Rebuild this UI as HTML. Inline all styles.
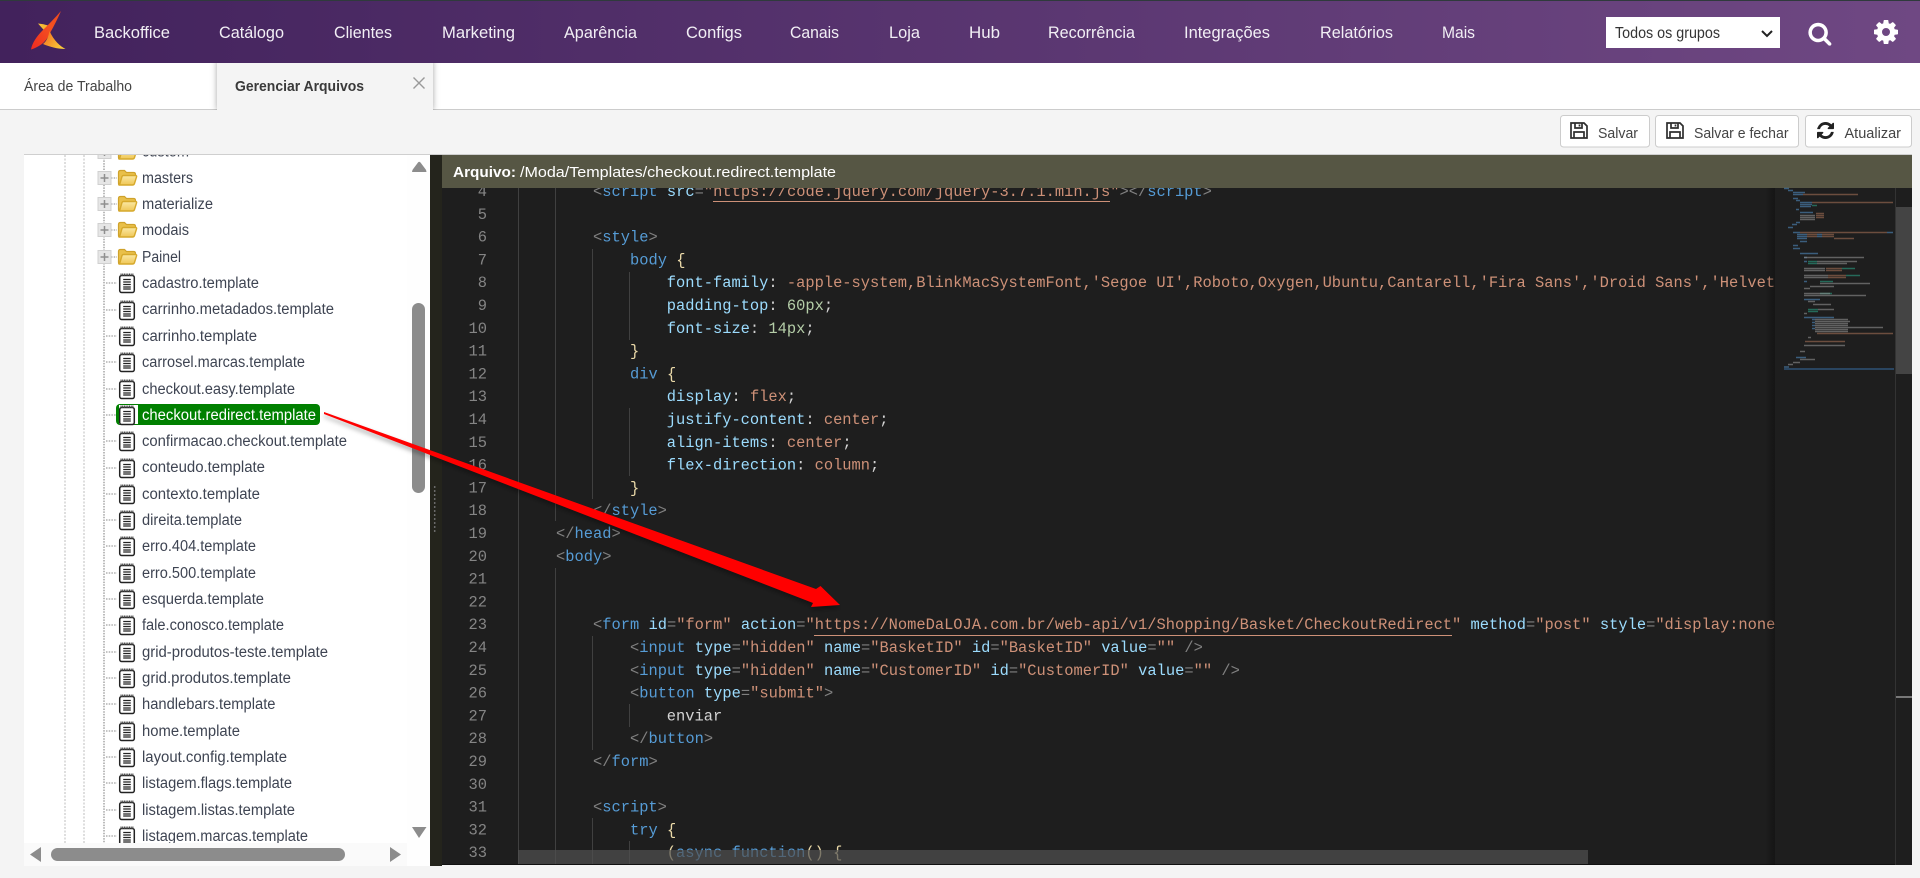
<!DOCTYPE html>
<html lang="pt-BR"><head><meta charset="utf-8"><title>Gerenciar Arquivos</title>
<style>
html,body{margin:0;padding:0;width:1920px;height:878px;overflow:hidden;background:#f4f4f4}
#hd{position:absolute;left:0;top:0;width:1920px;height:63px;background:linear-gradient(90deg,#42225c,#6f4883);border-top:1px solid #2f3a3c;box-sizing:border-box;z-index:3}
#tb{position:absolute;left:0;top:63px;width:1920px;height:46px;background:#fff;border-bottom:1px solid #ccc;z-index:1}
#at{position:absolute;left:217px;top:60px;width:216px;height:50px;background:#f4f4f4;box-shadow:0 0 6px rgba(0,0,0,.35);clip-path:inset(0 -10px 0 -10px);z-index:2}
svg#m{position:absolute;left:0;top:0;z-index:4}
text{font-family:"Liberation Sans",sans-serif;white-space:pre}
.nav{font-size:16.5px;fill:#f2eff5}
.tr{font-size:15.5px;fill:#3e4452}
.bt{font-size:15px;fill:#444}
.c{font-family:"Liberation Mono",monospace;font-size:15.4px;fill:#d4d4d4}
.ln{font-family:"Liberation Mono",monospace;font-size:15.4px;fill:#858585;text-anchor:end}
.b{fill:#808080}.t{fill:#569cd6}.a{fill:#9cdcfe}.s{fill:#ce9178}.n{fill:#b5cea8}.g{fill:#ead9a8}
.gd{stroke:#404040;stroke-width:1;fill:none}
</style></head><body>
<div id="hd"></div><div id="tb"></div><div id="at"></div>
<svg id="m" width="1920" height="878" viewBox="0 0 1920 878" xmlns="http://www.w3.org/2000/svg">
<defs>
<linearGradient id="lg1" x1="0" y1="1" x2="1" y2="0"><stop offset="0" stop-color="#f02a22"/><stop offset=".6" stop-color="#f4511f"/><stop offset="1" stop-color="#f0481e"/></linearGradient>
<linearGradient id="lg2" x1="0" y1="0" x2="1" y2=".6"><stop offset="0" stop-color="#f46a1c"/><stop offset="1" stop-color="#f9c93a"/></linearGradient>
<linearGradient id="lg3" x1="0" y1="0" x2="1" y2="1"><stop offset="0" stop-color="#f8c63c"/><stop offset="1" stop-color="#f59a1e"/></linearGradient>
<linearGradient id="fo" x1="0" y1="0" x2="0" y2="1"><stop offset="0" stop-color="#fbe9a6"/><stop offset="1" stop-color="#efc655"/></linearGradient>
<linearGradient id="sh" x1="0" y1="0" x2="1" y2="0"><stop offset="0" stop-color="#000" stop-opacity="0"/><stop offset="1" stop-color="#000" stop-opacity=".3"/></linearGradient>
<clipPath id="cc"><rect x="442" y="188" width="1333" height="678"/></clipPath>
<clipPath id="ct"><rect x="24" y="155" width="383" height="688"/></clipPath>
<clipPath id="cn"><rect x="442" y="188" width="75" height="678"/></clipPath>
<filter id="bl" x="-10%" y="-10%" width="120%" height="120%"><feGaussianBlur stdDeviation="2.5"/></filter>
<g id="fd"><path d="M-8.500 7Q-9 7-9 5V-5.500Q-9-7.500-7-7.500H-3L-1-5.500H6Q8-5.500 8-3.500V-1H-5z" fill="#e9c04a" stroke="#cfa22c" stroke-width="1.200"/><path d="M-8 7L-5.500-1.500Q-5-2.500-4-2.500H8Q9.500-2.500 9-1L7 5.500Q6.500 7 5 7Z" fill="url(#fo)" stroke="#d6a92c" stroke-width="1.400"/></g>
<g id="fl"><rect x="-7.300" y="-7.500" width="14.600" height="17" rx="2" fill="#fff" stroke="#222" stroke-width="1.500"/><path d="M-6-9.500v2.500M-4.300-9.500v2.500M-2.600-9.500v2.500M-.9-9.500v2.500M.8-9.500v2.500M2.500-9.500v2.500M4.200-9.500v2.500M5.900-9.500v2.500" stroke="#444" stroke-width="1"/><path d="M-3.800-3.500h7.600M-3.800-1h7.600M-3.800 1.500h7.600M-3.800 4h7.600M-3.800 6h7.600" stroke="#222" stroke-width="1.300"/></g>
<g id="pl"><rect x="-6.500" y="-6.500" width="13" height="13" fill="#e6e6e6" stroke="#d0d0d0"/><path d="M-4 0h8M0-4v8" stroke="#8f8f8f" stroke-width="1.500"/></g>
<path id="sv" d="M1 1h13l3 3v12H1zM5 1v5h7V1M9.500 2.500v2M4 16v-6h10v6" fill="none" stroke="#2e2e2e" stroke-width="1.700"/>
</defs>

<!-- Logo -->
<path d="M38 23.500C43 24 48 25 51 27L49 36C45 31 41 27 38 23.500Z" fill="url(#lg3)"/>
<path d="M61 11C58 18 54 26 50 33C47 40 42 46 31 49.500C32 43 37 36 42 31C48 25 55 18 61 11Z" fill="url(#lg1)"/>
<path d="M49.500 31C54 41 60 46 65.500 49C58 49 50 47 43 44C47 41 48.500 36 49.500 31Z" fill="url(#lg2)"/>

<!-- Nav -->
<g class="nav">
<text x="94" y="38" textLength="76" lengthAdjust="spacingAndGlyphs">Backoffice</text>
<text x="219" y="38" textLength="65" lengthAdjust="spacingAndGlyphs">Catálogo</text>
<text x="334" y="38" textLength="58" lengthAdjust="spacingAndGlyphs">Clientes</text>
<text x="442" y="38" textLength="73" lengthAdjust="spacingAndGlyphs">Marketing</text>
<text x="564" y="38" textLength="73" lengthAdjust="spacingAndGlyphs">Aparência</text>
<text x="686" y="38" textLength="56" lengthAdjust="spacingAndGlyphs">Configs</text>
<text x="790" y="38" textLength="49" lengthAdjust="spacingAndGlyphs">Canais</text>
<text x="889" y="38" textLength="31" lengthAdjust="spacingAndGlyphs">Loja</text>
<text x="969" y="38" textLength="31" lengthAdjust="spacingAndGlyphs">Hub</text>
<text x="1048" y="38" textLength="87" lengthAdjust="spacingAndGlyphs">Recorrência</text>
<text x="1184" y="38" textLength="86" lengthAdjust="spacingAndGlyphs">Integrações</text>
<text x="1320" y="38" textLength="73" lengthAdjust="spacingAndGlyphs">Relatórios</text>
<text x="1442" y="38" textLength="33" lengthAdjust="spacingAndGlyphs">Mais</text>
</g>
<rect x="1606" y="17" width="174" height="31" fill="#fff"/>
<text x="1615" y="38" font-size="15.500" fill="#333" textLength="105" lengthAdjust="spacingAndGlyphs">Todos os grupos</text>
<path d="M1762 31l5 5 5-5" fill="none" stroke="#222" stroke-width="2"/>
<svg x="1807.500" y="21" width="24.800" height="24.800" viewBox="0 0 1792 1792"><path fill="#fff" d="M1216 832q0-185-131.500-316.500t-316.500-131.500-316.500 131.500-131.500 316.500 131.500 316.500 316.500 131.500 316.500-131.500 131.500-316.500zm512 832q0 52-38 90t-90 38q-54 0-90-38l-343-342q-179 124-399 124-143 0-273.500-55.500t-225-150-150-225-55.500-273.500 55.500-273.500 150-225 225-150 273.500-55.500 273.500 55.500 225 150 150 225 55.500 273.500q0 220-124 399l343 343q37 37 37 90z"/></svg>
<svg x="1872" y="18" width="28" height="28" viewBox="0 0 1792 1792"><path fill="#fff" d="M1152 896q0-106-75-181t-181-75-181 75-75 181 75 181 181 75 181-75 75-181zm512-109v222q0 12-8 23t-20 13l-185 28q-19 54-39 91 35 50 107 138 10 12 10 25t-9 23q-27 37-99 108t-94 71q-12 0-26-9l-138-108q-44 23-91 38-16 136-29 186-7 28-36 28h-222q-14 0-24.500-8.500t-11.500-21.500l-28-184q-49-16-90-37l-141 107q-10 9-25 9-14 0-25-11-126-114-165-168-7-10-7-23 0-12 8-23 15-21 51-66.500t54-70.500q-27-50-41-99l-183-27q-13-2-21-12.500t-8-23.500v-222q0-12 8-23t19-13l186-28q14-46 39-92-40-57-107-138-10-12-10-24 0-10 9-23 26-36 98.500-107.500t94.500-71.500q13 0 26 10l138 107q44-23 91-38 16-136 29-186 7-28 36-28h222q14 0 24.500 8.500t11.500 21.500l28 184q49 16 90 37l142-107q9-9 24-9 13 0 25 10 129 119 165 170 7 8 7 22 0 12-8 23-15 21-51 66.500t-54 70.500q26 50 41 98l183 28q13 2 21 12.500t8 23.500z"/></svg>

<!-- Tabs -->
<text x="24" y="91" font-size="15" fill="#444" textLength="108" lengthAdjust="spacingAndGlyphs">Área de Trabalho</text>
<text x="235" y="91" font-size="15" font-weight="bold" fill="#3a3a3a" textLength="129" lengthAdjust="spacingAndGlyphs">Gerenciar Arquivos</text>
<path d="M413.500 77.500l11 11M424.500 77.500l-11 11" stroke="#999" stroke-width="1.400"/>

<!-- Buttons -->
<g fill="#fff" stroke="#ccc"><rect x="1560.500" y="115.500" width="89" height="31.500" rx="3"/><rect x="1655.500" y="115.500" width="143" height="31.500" rx="3"/><rect x="1805.500" y="115.500" width="106" height="31.500" rx="3"/></g>
<use href="#sv" x="1570" y="122"/><use href="#sv" x="1666" y="122"/>
<svg x="1817" y="122" width="17" height="17" viewBox="0 0 1536 1536"><path fill="#222" d="M1511 928q0 5-1 7-64 268-268 434.500t-478 166.500q-146 0-282.500-55t-243.500-157l-129 129q-19 19-45 19t-45-19-19-45v-448q0-26 19-45t45-19h448q26 0 45 19t19 45-19 45l-137 137q71 66 161 102t187 36q134 0 250-65t186-179q11-17 53-117 8-23 30-23h192q13 0 22.500 9.500t9.500 22.500zm25-800v448q0 26-19 45t-45 19h-448q-26 0-45-19t-19-45 19-45l138-138q-148-137-349-137-134 0-250 65t-186 179q-11 17-53 117-8 23-30 23h-199q-13 0-22.500-9.500t-9.500-22.500v-7q65-268 270-434.500t480-166.500q146 0 284 55.500t245 156.500l130-129q19-19 45-19t45 19 19 45z"/></svg>
<g class="bt">
<text x="1598" y="138" textLength="40" lengthAdjust="spacingAndGlyphs">Salvar</text>
<text x="1694" y="138" textLength="94.500" lengthAdjust="spacingAndGlyphs">Salvar e fechar</text>
<text x="1844.500" y="138" textLength="56.500" lengthAdjust="spacingAndGlyphs">Atualizar</text>
</g>

<!-- Tree panel -->
<rect x="24" y="154" width="406" height="712" fill="#fff"/>
<rect x="24" y="154" width="1888" height="1" fill="#cfcfcf"/>
<rect x="407" y="155" width="23" height="711" fill="#fefefe"/>
<rect x="24" y="843" width="383" height="23" fill="#fafafa"/>
<g clip-path="url(#ct)">
<path d="M65 155V843M84 155V843" stroke="#bdbdbd" stroke-dasharray="2 1.500" fill="none"/>
<path d="M104 155V843" stroke="#777" stroke-dasharray="1.500 1.200" fill="none"/>
<path d="M111 178h6M111 204h6M111 230h6M111 257h6M106 283h11M106 310h11M106 336h11M106 362h11M106 389h11M106 415h11M106 441h11M106 468h11M106 494h11M106 520h11M106 546h11M106 573h11M106 599h11M106 625h11M106 652h11M106 678h11M106 704h11M106 731h11M106 757h11M106 783h11M106 810h11M106 836h11" stroke="#888" stroke-dasharray="1.500 1.200" fill="none"/>
<use href="#pl" x="104.500" y="152"/><use href="#fd" x="127.500" y="152"/>
<use href="#pl" x="104.500" y="178"/><use href="#fd" x="127.500" y="178"/>
<use href="#pl" x="104.500" y="204"/><use href="#fd" x="127.500" y="204"/>
<use href="#pl" x="104.500" y="230"/><use href="#fd" x="127.500" y="230"/>
<use href="#pl" x="104.500" y="257"/><use href="#fd" x="127.500" y="257"/>
<rect x="116" y="404" width="204" height="21" rx="4" fill="#008000"/>
<rect x="119" y="405" width="19" height="19" fill="#fff"/>
<use href="#fl" x="127" y="283"/><use href="#fl" x="127" y="310"/><use href="#fl" x="127" y="336"/><use href="#fl" x="127" y="362"/><use href="#fl" x="127" y="389"/><use href="#fl" x="127" y="415"/><use href="#fl" x="127" y="441"/><use href="#fl" x="127" y="468"/><use href="#fl" x="127" y="494"/><use href="#fl" x="127" y="520"/><use href="#fl" x="127" y="546"/><use href="#fl" x="127" y="573"/><use href="#fl" x="127" y="599"/><use href="#fl" x="127" y="625"/><use href="#fl" x="127" y="652"/><use href="#fl" x="127" y="678"/><use href="#fl" x="127" y="704"/><use href="#fl" x="127" y="731"/><use href="#fl" x="127" y="757"/><use href="#fl" x="127" y="783"/><use href="#fl" x="127" y="810"/><use href="#fl" x="127" y="836"/>
<g class="tr">
<text x="142" y="156.500" textLength="47" lengthAdjust="spacingAndGlyphs">custom</text>
<text x="142" y="183" textLength="51" lengthAdjust="spacingAndGlyphs">masters</text>
<text x="142" y="209" textLength="71" lengthAdjust="spacingAndGlyphs">materialize</text>
<text x="142" y="235" textLength="47" lengthAdjust="spacingAndGlyphs">modais</text>
<text x="142" y="262" textLength="39" lengthAdjust="spacingAndGlyphs">Painel</text>
<text x="142" y="288" textLength="117" lengthAdjust="spacingAndGlyphs">cadastro.template</text>
<text x="142" y="314" textLength="192" lengthAdjust="spacingAndGlyphs">carrinho.metadados.template</text>
<text x="142" y="341" textLength="115" lengthAdjust="spacingAndGlyphs">carrinho.template</text>
<text x="142" y="367" textLength="163" lengthAdjust="spacingAndGlyphs">carrosel.marcas.template</text>
<text x="142" y="394" textLength="153" lengthAdjust="spacingAndGlyphs">checkout.easy.template</text>
<text x="142" y="420" textLength="174" lengthAdjust="spacingAndGlyphs" style="fill:#fff">checkout.redirect.template</text>
<text x="142" y="446" textLength="205" lengthAdjust="spacingAndGlyphs">confirmacao.checkout.template</text>
<text x="142" y="472" textLength="123" lengthAdjust="spacingAndGlyphs">conteudo.template</text>
<text x="142" y="499" textLength="118" lengthAdjust="spacingAndGlyphs">contexto.template</text>
<text x="142" y="525" textLength="100" lengthAdjust="spacingAndGlyphs">direita.template</text>
<text x="142" y="551" textLength="114" lengthAdjust="spacingAndGlyphs">erro.404.template</text>
<text x="142" y="578" textLength="114" lengthAdjust="spacingAndGlyphs">erro.500.template</text>
<text x="142" y="604" textLength="122" lengthAdjust="spacingAndGlyphs">esquerda.template</text>
<text x="142" y="630" textLength="142" lengthAdjust="spacingAndGlyphs">fale.conosco.template</text>
<text x="142" y="657" textLength="186" lengthAdjust="spacingAndGlyphs">grid-produtos-teste.template</text>
<text x="142" y="683" textLength="149" lengthAdjust="spacingAndGlyphs">grid.produtos.template</text>
<text x="142" y="709" textLength="133.500" lengthAdjust="spacingAndGlyphs">handlebars.template</text>
<text x="142" y="736" textLength="98" lengthAdjust="spacingAndGlyphs">home.template</text>
<text x="142" y="762" textLength="145" lengthAdjust="spacingAndGlyphs">layout.config.template</text>
<text x="142" y="788" textLength="150" lengthAdjust="spacingAndGlyphs">listagem.flags.template</text>
<text x="142" y="815" textLength="153" lengthAdjust="spacingAndGlyphs">listagem.listas.template</text>
<text x="142" y="841" textLength="166" lengthAdjust="spacingAndGlyphs">listagem.marcas.template</text>
</g>
</g>
<!-- tree scrollbars -->
<g fill="#8c8c8c">
<path d="M412 172q0-2 1.500-3.500L418 162.500q1-1.500 2.500 0L425 168.500q1.500 1.500 1.500 3.500z"/>
<path d="M412 827h14.500L419 838z"/>
<rect x="412" y="303" width="13" height="190" rx="6.500"/>
<path d="M41 847v15L30 854.500z"/>
<path d="M390 847v15L401 854.500z"/>
<rect x="51" y="848" width="294" height="13" rx="6.500"/>
</g>

<!-- Editor -->
<rect x="430" y="155" width="12" height="711" fill="#24241c"/>
<path d="M434.700 486V533" stroke="#6a6a6a" stroke-width="1.500" stroke-dasharray="2 2"/>
<rect x="442" y="188" width="1470" height="677" fill="#1e1e1e"/>
<rect x="442" y="155" width="1470" height="33" fill="#565644"/>
<text x="453" y="177" font-size="15" font-weight="bold" fill="#fff" textLength="63" lengthAdjust="spacingAndGlyphs">Arquivo:</text>
<text x="520" y="177" font-size="15" fill="#fff" textLength="316" lengthAdjust="spacingAndGlyphs">/Moda/Templates/checkout.redirect.template</text>

<g clip-path="url(#cn)"><g transform="translate(0 -1)">
<text class="ln" x="487" y="197">4</text><text class="ln" x="487" y="219.800">5</text><text class="ln" x="487" y="242.600">6</text><text class="ln" x="487" y="265.400">7</text><text class="ln" x="487" y="288.200">8</text><text class="ln" x="487" y="311">9</text><text class="ln" x="487" y="333.800">10</text><text class="ln" x="487" y="356.600">11</text><text class="ln" x="487" y="379.400">12</text><text class="ln" x="487" y="402.200">13</text><text class="ln" x="487" y="425">14</text><text class="ln" x="487" y="447.800">15</text><text class="ln" x="487" y="470.600">16</text><text class="ln" x="487" y="493.400">17</text><text class="ln" x="487" y="516.200">18</text><text class="ln" x="487" y="539">19</text><text class="ln" x="487" y="561.800">20</text><text class="ln" x="487" y="584.600">21</text><text class="ln" x="487" y="607.400">22</text><text class="ln" x="487" y="630.200">23</text><text class="ln" x="487" y="653">24</text><text class="ln" x="487" y="675.800">25</text><text class="ln" x="487" y="698.600">26</text><text class="ln" x="487" y="721.400">27</text><text class="ln" x="487" y="744.200">28</text><text class="ln" x="487" y="767">29</text><text class="ln" x="487" y="789.800">30</text><text class="ln" x="487" y="812.600">31</text><text class="ln" x="487" y="835.400">32</text><text class="ln" x="487" y="858.200">33</text>
</g></g>

<path class="gd" d="M518.500 188V865M555.500 188V521M555.500 568V865M592.500 249V499M592.500 636V750M592.500 818V865M629.500 272V340M629.500 408V476M629.500 704V727M629.500 841V865"/>

<g clip-path="url(#cc)">
<rect x="713" y="201" width="397" height="1" fill="#ce9178"/>
<rect x="814" y="635" width="638" height="1" fill="#ce9178"/>
<g transform="translate(0 -1)">
<text class="c" x="593" y="197"><tspan class="b">&lt;</tspan><tspan class="t">script</tspan> <tspan class="a">src</tspan><tspan class="b">=</tspan><tspan class="s">"https://code.jquery.com/jquery-3.7.1.min.js"</tspan><tspan class="b">&gt;&lt;/</tspan><tspan class="t">script</tspan><tspan class="b">&gt;</tspan></text>
<text class="c" x="593" y="242.600"><tspan class="b">&lt;</tspan><tspan class="t">style</tspan><tspan class="b">&gt;</tspan></text>
<text class="c" x="630" y="265.400"><tspan class="t">body</tspan> <tspan class="g">{</tspan></text>
<text class="c" x="666.800" y="288.200"><tspan class="a">font-family</tspan>: <tspan class="s">-apple-system,BlinkMacSystemFont,'Segoe UI',Roboto,Oxygen,Ubuntu,Cantarell,'Fira Sans','Droid Sans','Helvetica Neue'</tspan></text>
<text class="c" x="666.800" y="311"><tspan class="a">padding-top</tspan>: <tspan class="n">60px</tspan>;</text>
<text class="c" x="666.800" y="333.800"><tspan class="a">font-size</tspan>: <tspan class="n">14px</tspan>;</text>
<text class="c" x="630" y="356.600"><tspan class="g">}</tspan></text>
<text class="c" x="630" y="379.400"><tspan class="t">div</tspan> <tspan class="g">{</tspan></text>
<text class="c" x="666.800" y="402.200"><tspan class="a">display</tspan>: <tspan class="s">flex</tspan>;</text>
<text class="c" x="666.800" y="425"><tspan class="a">justify-content</tspan>: <tspan class="s">center</tspan>;</text>
<text class="c" x="666.800" y="447.800"><tspan class="a">align-items</tspan>: <tspan class="s">center</tspan>;</text>
<text class="c" x="666.800" y="470.600"><tspan class="a">flex-direction</tspan>: <tspan class="s">column</tspan>;</text>
<text class="c" x="630" y="493.400"><tspan class="g">}</tspan></text>
<text class="c" x="593" y="516.200"><tspan class="b">&lt;/</tspan><tspan class="t">style</tspan><tspan class="b">&gt;</tspan></text>
<text class="c" x="556" y="539"><tspan class="b">&lt;/</tspan><tspan class="t">head</tspan><tspan class="b">&gt;</tspan></text>
<text class="c" x="556" y="561.800"><tspan class="b">&lt;</tspan><tspan class="t">body</tspan><tspan class="b">&gt;</tspan></text>
<text class="c" x="593" y="630.200"><tspan class="b">&lt;</tspan><tspan class="t">form</tspan> <tspan class="a">id</tspan><tspan class="b">=</tspan><tspan class="s">"form"</tspan> <tspan class="a">action</tspan><tspan class="b">=</tspan><tspan class="s">"https://NomeDaLOJA.com.br/web-api/v1/Shopping/Basket/CheckoutRedirect"</tspan> <tspan class="a">method</tspan><tspan class="b">=</tspan><tspan class="s">"post"</tspan> <tspan class="a">style</tspan><tspan class="b">=</tspan><tspan class="s">"display:none;"</tspan><tspan class="b">&gt;</tspan></text>
<text class="c" x="630" y="653"><tspan class="b">&lt;</tspan><tspan class="t">input</tspan> <tspan class="a">type</tspan><tspan class="b">=</tspan><tspan class="s">"hidden"</tspan> <tspan class="a">name</tspan><tspan class="b">=</tspan><tspan class="s">"BasketID"</tspan> <tspan class="a">id</tspan><tspan class="b">=</tspan><tspan class="s">"BasketID"</tspan> <tspan class="a">value</tspan><tspan class="b">=</tspan><tspan class="s">""</tspan> <tspan class="b">/&gt;</tspan></text>
<text class="c" x="630" y="675.800"><tspan class="b">&lt;</tspan><tspan class="t">input</tspan> <tspan class="a">type</tspan><tspan class="b">=</tspan><tspan class="s">"hidden"</tspan> <tspan class="a">name</tspan><tspan class="b">=</tspan><tspan class="s">"CustomerID"</tspan> <tspan class="a">id</tspan><tspan class="b">=</tspan><tspan class="s">"CustomerID"</tspan> <tspan class="a">value</tspan><tspan class="b">=</tspan><tspan class="s">""</tspan> <tspan class="b">/&gt;</tspan></text>
<text class="c" x="630" y="698.600"><tspan class="b">&lt;</tspan><tspan class="t">button</tspan> <tspan class="a">type</tspan><tspan class="b">=</tspan><tspan class="s">"submit"</tspan><tspan class="b">&gt;</tspan></text>
<text class="c" x="666.800" y="721.400">enviar</text>
<text class="c" x="630" y="744.200"><tspan class="b">&lt;/</tspan><tspan class="t">button</tspan><tspan class="b">&gt;</tspan></text>
<text class="c" x="593" y="767"><tspan class="b">&lt;/</tspan><tspan class="t">form</tspan><tspan class="b">&gt;</tspan></text>
<text class="c" x="593" y="812.600"><tspan class="b">&lt;</tspan><tspan class="t">script</tspan><tspan class="b">&gt;</tspan></text>
<text class="c" x="630" y="835.400"><tspan class="t">try</tspan> <tspan class="g">{</tspan></text>
<text class="c" x="666.800" y="858.200"><tspan class="g">(</tspan><tspan class="t">async</tspan> <tspan class="t">function</tspan><tspan class="g">()</tspan> <tspan class="g">{</tspan></text>
</g>
</g>
<rect x="518" y="850" width="1070" height="14" fill="#505050" fill-opacity=".7"/>
<rect x="442" y="864" width="1470" height="1" fill="#111"/>

<!-- Minimap -->
<rect x="1765" y="188" width="10" height="677" fill="url(#sh)"/>
<g fill="none" stroke-width="1.400" stroke-opacity=".62">
<path stroke="#4d86b8" d="M1784 188.500h5M1788 190.500h5M1793 192.500h12M1793 194.500h10M1793 198.500h5M1796 200.500h4M1800 202.500h12M1800 204.500h12M1800 206.500h11M1796 209.500h3M1800 212.500h13M1796 222.500h4M1792 224.500h5M1788 227.500h5M1793 232.500h7M1887 232.500h6M1797 234.500h10M1797 236.500h10M1797 238.500h10M1817 234.500h5M1817 236.500h5M1800 241.500h7M1793 245.500h5M1793 248.500h7M1800 253.500h18M1804 257.500h3M1804 261.500h3M1804 281.500h3M1804 299.500h16M1804 317.500h30M1812 319.500h3M1812 322.500h3M1812 325.500h3M1812 328.500h3M1796 357.500h10M1784 367h5"/>
<path stroke="#9c6a52" d="M1812 202.500h81M1816 213.500h8M1816 215.500h8M1816 217.500h8M1800 232.500h87M1807 234.500h10M1807 236.500h10M1822 234.500h12M1822 236.500h12M1834 238.500h20M1803 194.500h55M1826 268.500h16M1826 270.500h16M1828 275.500h18M1828 277.500h18M1817 333.500h76M1805 341.500h40"/>
<path stroke="#2a9a80" d="M1812 205.500h5M1808 261.500h9M1808 263.500h9M1842 268.500h13M1846 275.500h14M1820 281.500h13M1808 309.500h10M1808 311.500h10M1820 293.500h12"/>
<path stroke="#8c8c8c" d="M1800 215.500h15M1800 217.500h15M1800 219.500h15M1804 257.500h60M1817 261.500h40M1817 263.500h30M1804 268.500h21M1804 270.500h21M1804 275.500h24M1804 277.500h24M1820 283.500h50M1810 286.500h24M1804 288.500h6M1804 295.500h62M1804 293.500h26M1808 301.500h7M1813 304.500h18M1818 309.500h16M1804 313.500h3M1815 319.500h33M1815 321.500h35M1815 323.500h33M1815 325.500h33M1815 327.500h68M1815 329.500h33M1815 331.500h33M1808 337.500h3M1804 345.500h41M1800 351.500h5M1800 359.500h15M1793 362.500h7M1788 364.500h5"/>
<path stroke="#2a4560" stroke-width="2" stroke-opacity="1" d="M1784 369h110"/>
</g>
<rect x="1895" y="188" width="1" height="677" fill="#333"/>
<rect x="1896" y="188" width="16" height="677" fill="#1e1e1e"/>
<rect x="1896" y="207" width="16" height="167" fill="#444"/>
<rect x="1896" y="696" width="16" height="2" fill="#777"/>

<!-- Arrow -->
<g>
<path d="M324 412L816 589L820.500 586L840 605L811 607L813 603L324 414Z" fill="#000" fill-opacity=".35" filter="url(#bl)" transform="translate(0 3)"/>
<path d="M324 412L816 589L820.500 586L840 605L811 607L813 603L324 414Z" fill="#ff0000"/>
</g>
</svg>
</body></html>
